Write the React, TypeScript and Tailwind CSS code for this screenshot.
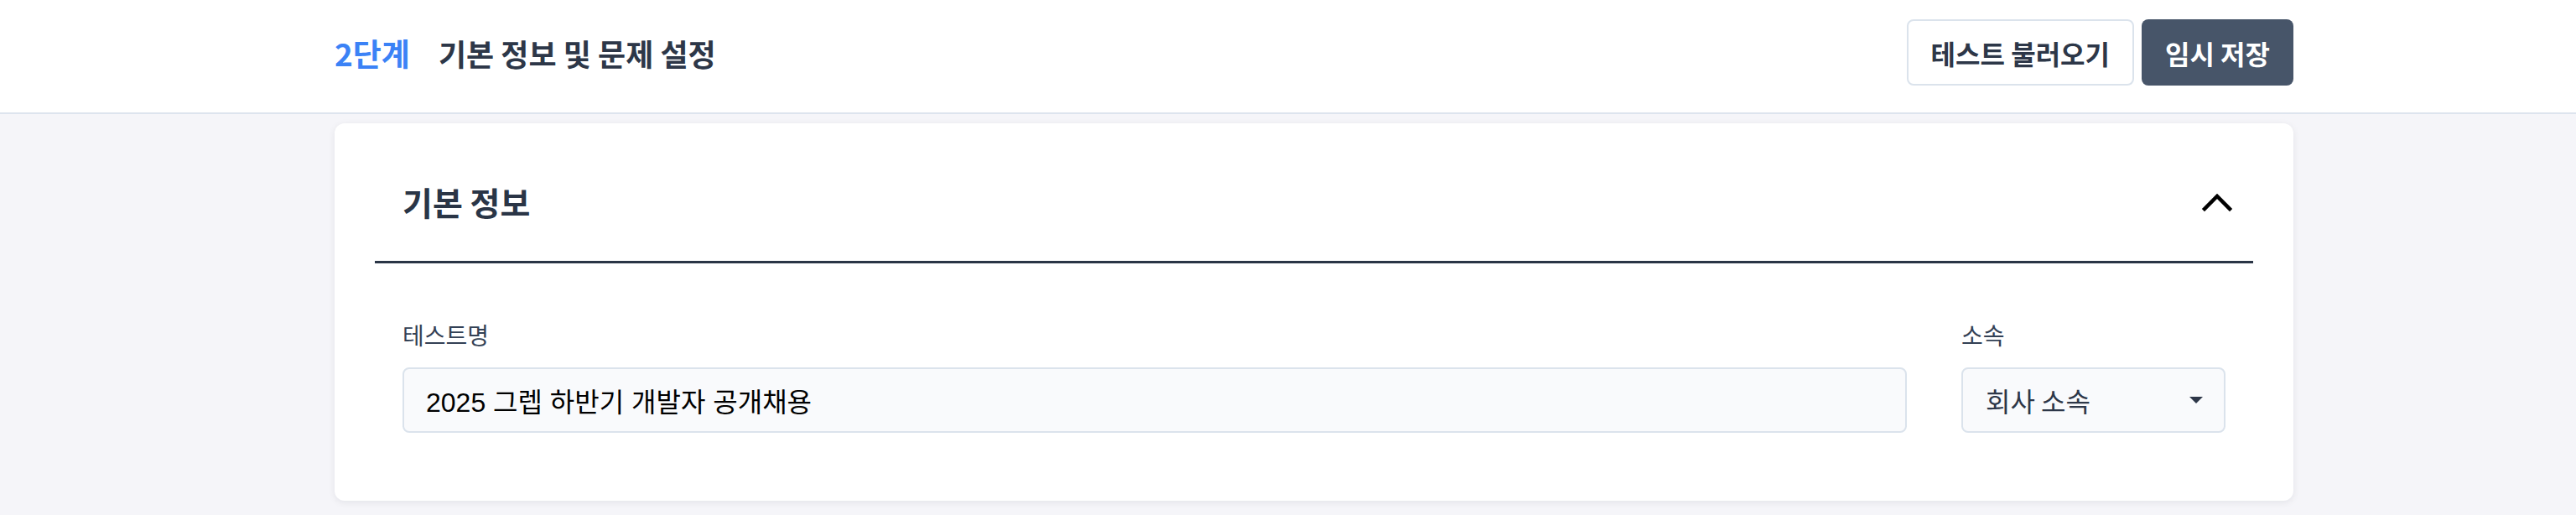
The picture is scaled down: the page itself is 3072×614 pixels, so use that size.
import { useState } from "react";

function ChevronUp() {
  return (
    <svg width="40" height="40" viewBox="0 0 40 40" fill="none">
      <polyline
        points="5,29 20,14 35,29"
        stroke="#000"
        strokeWidth="4.5"
        strokeLinecap="square"
        strokeLinejoin="miter"
      />
    </svg>
  );
}

function Caret() {
  return (
    <svg width="16" height="8" viewBox="0 0 16 8">
      <path d="M0 0 L16 0 L8 8 Z" fill="#2d3748" />
    </svg>
  );
}

export default function App() {
  const [name, setName] = useState("2025 그렙 하반기 개발자 공개채용");

  return (
    <div className="min-h-[614px] bg-[#f5f5f9] font-['Noto_Sans_CJK_KR',sans-serif] text-[#2d3748]">
      <header className="border-b-2 border-[#dde4ee] bg-white">
        <div className="ml-[399px] flex w-[2336px] items-center justify-between pt-[23px] pb-[32px]">
          <div className="flex items-center gap-[34px]">
            <span className="text-[37px] leading-[48px] font-bold text-[#3b82f6]">2단계</span>
            <span className="text-[36px] leading-[48px] font-semibold text-[#2d3748]">
              기본 정보 및 문제 설정
            </span>
          </div>
          <div className="flex items-center gap-[9px]">
            <button className="h-[79px] rounded-lg border-2 border-[#dbe3ec] bg-white px-[27px] text-[32px] leading-none font-semibold text-[#2d3748]">
              테스트 불러오기
            </button>
            <button className="h-[79px] rounded-lg bg-[#475569] px-[28px] text-[32px] leading-none font-semibold text-white">
              임시 저장
            </button>
          </div>
        </div>
      </header>

      <section className="mt-[11px] ml-[399px] w-[2336px] rounded-xl bg-white shadow-[0_2px_8px_rgba(15,23,42,0.08)]">
        <div className="mx-12 flex h-[167px] items-center justify-between border-b-[3px] border-[#2a3546] pt-[22px] pr-[23px] pl-[33px]">
          <h2 className="text-[39px] leading-[52px] font-bold text-[#2a3546]">기본 정보</h2>
          <ChevronUp />
        </div>

        <div className="flex gap-[65px] px-[81px] pt-[67px] pb-[81px]">
          <div className="flex flex-1 flex-col gap-[21px]">
            <label className="text-[28px] leading-[36px] text-[#334155]">테스트명</label>
            <input
              value={name}
              onChange={(e) => setName(e.target.value)}
              className="h-[78px] rounded-lg border-2 border-[#dbe3ec] bg-[#f9fafc] px-[26px] font-['Liberation_Sans','Noto_Sans_CJK_KR',sans-serif] text-[32px] text-black outline-none"
            />
          </div>
          <div className="flex w-[315px] flex-col gap-[21px]">
            <label className="text-[28px] leading-[36px] text-[#334155]">소속</label>
            <div className="flex h-[78px] items-center justify-between rounded-lg border-2 border-[#dbe3ec] bg-[#f9fafc] pr-[25px] pl-[27px]">
              <span className="text-[32px] leading-none text-[#2d3748]">회사 소속</span>
              <Caret />
            </div>
          </div>
        </div>
      </section>
    </div>
  );
}
